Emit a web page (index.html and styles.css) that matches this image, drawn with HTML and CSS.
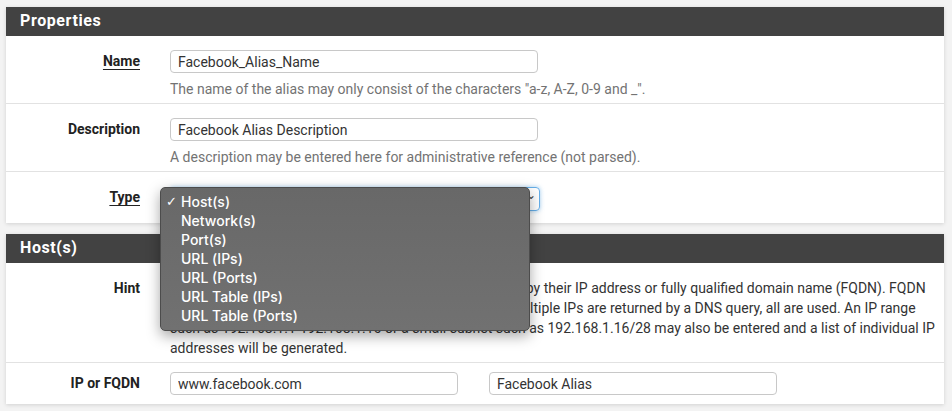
FILE: index.html
```html
<!DOCTYPE html>
<html lang="en">
<head>
  <meta charset="UTF-8">
  <title>Firewall: Aliases: Edit</title>
  <link rel="stylesheet" href="styles.css">
</head>
<body>
  <div class="panel">
    <div class="panel-heading">Properties</div>
    <div class="form-row">
      <label class="control-label"><span class="tip">Name</span></label>
      <div class="field">
        <input class="form-control wide" type="text" value="Facebook_Alias_Name">
        <div class="help-block">The name of the alias may only consist of the characters "a-z, A-Z, 0-9 and _".</div>
      </div>
    </div>
    <div class="form-row">
      <label class="control-label">Description</label>
      <div class="field">
        <input class="form-control wide" type="text" value="Facebook Alias Description">
        <div class="help-block">A description may be entered here for administrative reference (not parsed).</div>
      </div>
    </div>
    <div class="form-row last">
      <label class="control-label"><span class="tip">Type</span></label>
      <div class="field">
        <div class="select-wrap">
          <div class="form-select">Host(s)<span class="caret">&#8964;</span></div>
          <ul class="popup-menu">
            <li class="checked">Host(s)</li>
            <li>Network(s)</li>
            <li>Port(s)</li>
            <li>URL (IPs)</li>
            <li>URL (Ports)</li>
            <li>URL Table (IPs)</li>
            <li>URL Table (Ports)</li>
          </ul>
        </div>
      </div>
    </div>
  </div>

  <div class="panel">
    <div class="panel-heading">Host(s)</div>
    <div class="form-row">
      <label class="control-label">Hint</label>
      <div class="field hint">Enter as many hosts as desired. Hosts must be specified by their IP address or fully qualified domain name (FQDN). FQDN hostnames are periodically re-resolved and updated. If multiple IPs are returned by a DNS query, all are used. An IP range such as 192.168.1.1-192.168.1.10 or a small subnet such as 192.168.1.16/28 may also be entered and a list of individual IP addresses will be generated.</div>
    </div>
    <div class="form-row repeat last">
      <label class="control-label">IP or FQDN</label>
      <div class="field pair">
        <input class="form-control half" type="text" value="www.facebook.com">
        <input class="form-control half" type="text" value="Facebook Alias">
      </div>
    </div>
  </div>
</body>
</html>
```

FILE: styles.css
```css
body {
  font-family: Roboto, "Liberation Sans", Arial, sans-serif;
  font-size: 14px;
  color: #333;
  background-color: #f3f3f3;
  margin: 0;
  padding: 7px 8px 0 6px;
}
.panel {
  background: #fff;
  box-shadow: 0 1px 4px rgba(0, 0, 0, 0.14);
  margin-bottom: 11px;
}
.panel-heading {
  background-color: #424242;
  color: #fff;
  font-size: 16px;
  font-weight: bold;
  letter-spacing: 0.6px;
  height: 29px;
  line-height: 28px;
  padding: 0 14px;
}
.form-row {
  display: grid;
  grid-template-columns: 134px 1fr;
  column-gap: 30px;
  padding: 14px 9px 4px 0;
  border-bottom: 1px solid #e2e2e2;
}
.form-row.last {
  border-bottom: none;
  padding-bottom: 12px;
}
.form-row.repeat {
  padding-top: 9px;
  padding-bottom: 9px;
}
.control-label {
  text-align: right;
  font-weight: bold;
  color: #222;
  line-height: 23px;
}
.tip {
  text-decoration: underline;
  text-underline-offset: 3px;
}
.form-control {
  display: block;
  box-sizing: border-box;
  height: 23px;
  padding: 0 7px;
  border: 1px solid #c8c8c8;
  border-radius: 4px;
  font-family: inherit;
  font-size: 14px;
  color: #333;
  background: #fff;
}
.wide {
  width: 368px;
}
.help-block {
  color: #737373;
  margin-top: 6px;
  line-height: 20px;
}
.hint {
  line-height: 20px;
  margin-top: 1px;
}
.pair {
  display: flex;
  gap: 31px;
}
.half {
  width: 288px;
}
.select-wrap {
  position: relative;
  width: 370px;
}
.form-select {
  box-sizing: border-box;
  height: 24px;
  margin-top: 1px;
  border: 1px solid #66afe9;
  border-radius: 4px;
  box-shadow: 0 0 4px rgba(102, 175, 233, 0.6);
  padding: 0 7px;
  line-height: 22px;
  position: relative;
}
.caret {
  position: absolute;
  right: 3px;
  top: -4px;
  font-size: 12px;
  color: #444;
}

/* native popup drawn over the form */
.popup-menu {
  position: absolute;
  left: -10px;
  top: 0;
  width: 370px;
  box-sizing: border-box;
  margin: 0;
  padding: 4px 0 5px;
  list-style: none;
  background: linear-gradient(#686868, #717171);
  border: 1px solid #4c4c4c;
  border-radius: 5px;
  box-shadow: 0 5px 14px rgba(0, 0, 0, 0.35);
  font-family: Inter, "Noto Sans", sans-serif;
  font-size: 14px;
  font-weight: 500;
  color: #fff;
}
.popup-menu li {
  height: 19px;
  line-height: 19px;
  padding-left: 20px;
  position: relative;
}
.popup-menu li.checked::before {
  content: "\2713";
  position: absolute;
  left: 5px;
  font-family: "DejaVu Sans", sans-serif;
  font-size: 13px;
  font-weight: normal;
}
```
